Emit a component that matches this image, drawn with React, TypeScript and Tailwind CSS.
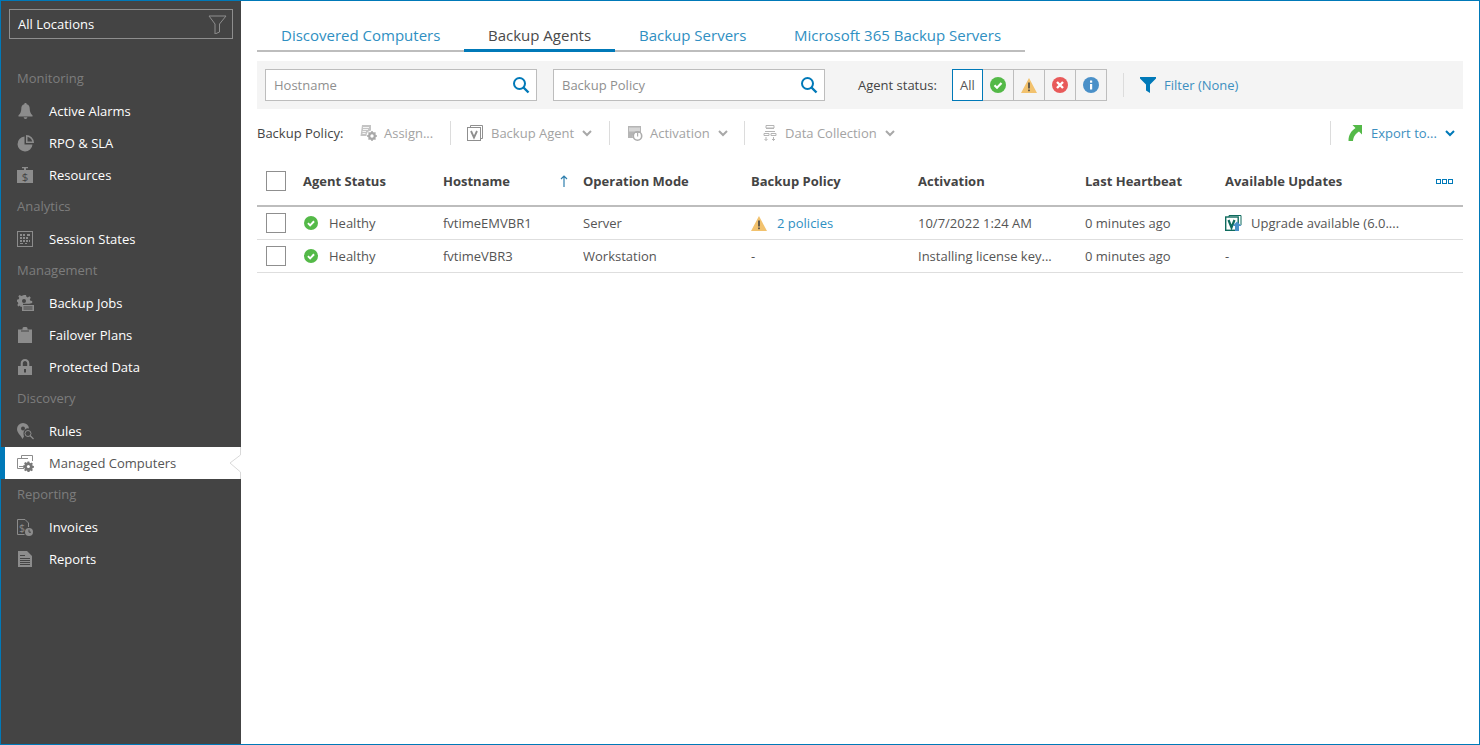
import React from "react";

const F = "#8c8c8c";
const Bell = () => (<svg width="15" height="16" viewBox="0 0 15 16"><path fill={F} d="M7.500 0c.8 0 1.200.5 1.200 1.200 2.100.5 3 2.200 3 4.300 0 3 .8 5 2.800 6.800v1.200H0.500v-1.200C2.500 10.500 3.300 8.500 3.300 5.500c0-2.100.9-3.800 3-4.300C6.300.5 6.700 0 7.500 0zM5.700 14.300h3.600c0 1-.8 1.700-1.800 1.700s-1.800-.7-1.800-1.700z"/></svg>);
const Pie = () => (<svg width="17" height="17" viewBox="0 0 17 17"><path fill={F} d="M7.500 1.500v8h8A7.500 7.500 0 1 1 7.500 1.500z"/><path fill={F} d="M9 0a8 8 0 0 1 8 8H9V0zm1.500 1.800v4.700h4.700a6.500 6.500 0 0 0-4.700-4.700z"/></svg>);
const Money = () => (<svg width="16" height="16" viewBox="0 0 16 16"><path fill={F} d="M5 0h6v1.200H9V3h7v13H0V3h7V1.200H5z"/><text x="8" y="14.200" textAnchor="middle" fontSize="11.500" fontFamily="Open Sans" fill="#444">$</text></svg>);
const Grid = () => (<svg width="16" height="16" viewBox="0 0 16 16"><rect x=".5" y=".5" width="15" height="15" fill="none" stroke={F}/><path fill={F} d="M3 3h2v2H3zM6 3h2v2H6zM10 3h3v2h-3zM3 6h2v2H3zM6 6h2v2H6zM9 6h2v2H9zM3 9h2v2H3zM6 9h2v2H6zM9 9h2v2H9zM12 9h1v2h-1zM3 12h3v1H3zM8 12h2v1H8z"/></svg>);
const GearDoc = () => (<svg width="17" height="17" viewBox="0 0 17 17"><path fill={F} d="M7 0h2l.4 1.800 1.400.6L12.400 1.300l1.400 1.400-1 1.600.6 1.400 1.800.4v2l-3 .6H6v3H3.400l-.4-1.300-1.600 1-1.100-1.400 1-1.600-.6-1.400L0 6.700v-2l1.700-.4.600-1.400-1-1.600L2.700 0 4.300 1l1.400-.6z"/><circle cx="7" cy="6" r="2" fill="#444"/><rect x="5" y="10" width="12" height="6" fill={F}/><rect x="6.500" y="11.500" width="9" height="1" fill="#444"/><rect x="6.500" y="13.500" width="9" height="1" fill="#444"/></svg>);
const Clip = () => (<svg width="14" height="16" viewBox="0 0 14 16"><path fill={F} d="M0 2.500h4.500V1.200C4.500.5 5.500 0 7 0s2.500.5 2.500 1.200v1.300H14V16H0z"/><rect x="3" y="3.500" width="8" height="1" fill="#444" /></svg>);
const Lock = () => (<svg width="14" height="16" viewBox="0 0 14 16"><path fill={F} d="M7 0c2.500 0 4.300 1.700 4.300 4.200V7H14v9H0V7h2.700V4.200C2.700 1.700 4.500 0 7 0zm0 2C5.700 2 4.800 3 4.800 4.300V7h4.400V4.300C9.200 3 8.300 2 7 2z"/><rect x="6" y="10" width="2" height="3.500" fill="#444"/></svg>);
const PinSearch = () => (<svg width="17" height="17" viewBox="0 0 17 17"><path fill={F} d="M6 0A6 6 0 0 1 12 5.500a4.500 4.500 0 0 0-5.500 4.500c0 2 .3 2.500.5 3.500L5.500 16C4 12.500 0 10 0 6a6 6 0 0 1 6-6z"/><circle cx="6" cy="5.500" r="2" fill="#444"/><circle cx="11" cy="10.500" r="3" fill="none" stroke={F}/><path stroke={F} strokeWidth="1.300" d="M13 12.500l3.500 3.500"/></svg>);
const Computers = () => (<svg width="17" height="17" viewBox="0 0 17 17" fill="none" stroke="#8c8c8c"><path d="M4.500 3V.5h11V6"/><path d="M7 13.500H.5v-10h10.500"/><path d="M2 11.500h4"/><path fill="#777" stroke="none" d="M10.500 6.500h1.800l.3 1.300 1 .4 1.100-.7 1.200 1.200-.7 1 .4 1 1.300.3v1.800l-1.300.3-.4 1 .7 1-1.200 1.200-1-.7-1 .4-.3 1.300h-1.800l-.3-1.300-1-.4-1 .7-1.200-1.200.7-1-.4-1-1.300-.3V10.600l1.300-.3.400-1-.7-1 1.200-1.200 1 .7 1-.4z"/><circle cx="11.400" cy="11.500" r="1.500" fill="#fff" stroke="none"/></svg>);
const Invoice = () => (<svg width="16" height="17" viewBox="0 0 16 17"><path fill="none" stroke={F} d="M7.500 15.500h-7V.5h7.500l3.500 3.500V8"/><text x="5" y="12.500" textAnchor="middle" fontSize="10.500" fontFamily="Open Sans" fill={F}>$</text><circle cx="12" cy="13" r="4" fill={F}/><path stroke="#444" fill="none" d="M12 10.500v2.700h2"/></svg>);
const Report = () => (<svg width="14" height="16" viewBox="0 0 14 16"><path fill={F} d="M0 0h9l5 5v11H0z"/><path fill="#444" d="M2 4h5v1H2zM2 7h10v1H2zM2 9h10v1H2zM2 11h10v1H2zM2 13h10v1H2z"/></svg>);

const Search = () => (<svg width="18" height="18" viewBox="0 0 18 18" fill="none" stroke="#0079b8" strokeWidth="2"><circle cx="7.500" cy="7.500" r="5.500"/><path d="M11.500 11.500l5 5" strokeWidth="2.400"/></svg>);
const Ok = ({ s = 15 }: { s?: number }) => (<svg width={s} height={s} viewBox="0 0 16 16"><circle cx="8" cy="8" r="8" fill="#54b948"/><path d="M4.500 8.200l2.500 2.500 4.500-4.700" fill="none" stroke="#fff" strokeWidth="2.200"/></svg>);
const Warn = ({ s = 16 }: { s?: number }) => (<svg width={s} height={s - 1} viewBox="0 0 16 15"><path d="M8 0l8 15H0z" fill="#f2c26e"/><rect x="7.200" y="4.500" width="1.600" height="6" fill="#444"/><rect x="7.200" y="11.500" width="1.600" height="1.700" fill="#444"/></svg>);
const Err = () => (<svg width="16" height="16" viewBox="0 0 16 16"><circle cx="8" cy="8" r="8" fill="#e85a5a"/><path d="M5 5l6 6M11 5l-6 6" stroke="#fff" strokeWidth="2.400"/></svg>);
const Info = () => (<svg width="16" height="16" viewBox="0 0 16 16"><circle cx="8" cy="8" r="8" fill="#4a90c8"/><rect x="7" y="7" width="2.200" height="5.500" fill="#fff"/><rect x="7" y="3.500" width="2.200" height="2.200" fill="#fff"/></svg>);
const Funnel = () => (<svg width="16" height="16" viewBox="0 0 16 16"><path fill="#0079b8" d="M0 0h16v1.500L10 7.500V16l-4-2.500V7.500L0 1.500z"/></svg>);
const Chev = ({ c = "#a8a8a8" }: { c?: string }) => (<svg width="10" height="7" viewBox="0 0 10 7"><path d="M1 1l4 4 4-4" fill="none" stroke={c} strokeWidth="2"/></svg>);
const Assign = () => (<svg width="17" height="16" viewBox="0 0 17 16"><path fill="#c4c4c4" d="M2 0h9v5.500A5.500 5.500 0 0 0 6.500 11H0.500z"/><path stroke="#f4f4f4" d="M3 2.500h6M3 4.500h5M2.500 6.500h3.500M2.500 8.500h3"/><circle cx="12" cy="11" r="2.800" fill="none" stroke="#a8a8a8" strokeWidth="2.200"/><path stroke="#a8a8a8" strokeWidth="1.500" d="M12 6v2M12 14v2M7 11h2M15 11h2M8.500 7.500l1.300 1.300M14.200 13.200l1.300 1.300M15.500 7.500l-1.300 1.300M9.800 13.200l-1.300 1.300"/></svg>);
const VBox = () => (<svg width="16" height="16" viewBox="0 0 16 16" fill="none" stroke="#8f8f8f"><path d="M3.500 2.500V.5h12v13h-1.500"/><rect x=".5" y="2.500" width="13" height="13"/><path d="M4 6l3 6.500L10 6" strokeWidth="1.800"/></svg>);
const Activ = () => (<svg width="16" height="15" viewBox="0 0 16 15"><path fill="#b5b5b5" d="M1 0h13v7H8a4 4 0 0 0-2 5H1z"/><rect x="2" y="1.500" width="11" height="4" fill="#d6d6d6"/><circle cx="10.500" cy="10" r="4.200" fill="none" stroke="#adadad" strokeWidth="1.600"/><rect x="10" y="7" width="1.200" height="3.500" fill="#adadad"/></svg>);
const DataC = () => (<svg width="16" height="16" viewBox="0 0 16 16" fill="none" stroke="#b5b5b5"><path d="M4 .5h8v2.500H4zM4 3.500h8M3 6.500h10M2 8.500h5v2H2zM9 8.500h5v2H9zM4 12v3.500M2.500 14l1.500 1.500L5.500 14M11.500 12v3.500M10 14l1.500 1.500L13 14"/></svg>);
const Export = () => (<svg width="14" height="16" viewBox="0 0 14 16"><path fill="#54b948" d="M4.500 0H14v9.500L11 6.500C8 8.500 5.500 11 5 16H0.500C0.500 10 3 6 7.500 3z"/></svg>);
const Upgrade = () => (<svg width="17" height="16" viewBox="0 0 17 16"><path fill="none" stroke="#0f6b5e" d="M4 2V.5h12V10"/><rect x=".7" y="2" width="12.500" height="13.300" fill="#fff" stroke="#0f6b5e" strokeWidth="1.400"/><path d="M3.500 5l3 7.500L9.500 5" fill="none" stroke="#0f6b5e" strokeWidth="2.200"/><path fill="#4a90c8" d="M12 6.500l4.500 4.500h-2.500v5h-4v-5H7.500z"/></svg>);

const navGroups: [string, [string, React.ReactNode][]][] = [
  ["Monitoring", [["Active Alarms", <Bell />], ["RPO & SLA", <Pie />], ["Resources", <Money />]]],
  ["Analytics", [["Session States", <Grid />]]],
  ["Management", [["Backup Jobs", <GearDoc />], ["Failover Plans", <Clip />], ["Protected Data", <Lock />]]],
  ["Discovery", [["Rules", <PinSearch />], ["Managed Computers", <Computers />]]],
  ["Reporting", [["Invoices", <Invoice />], ["Reports", <Report />]]],
];

const grid = "grid grid-cols-[46px_140px_140px_168px_167px_167px_140px_238px] items-center";
const Check = () => (<div className="ml-[9px] w-[20px] h-[20px] border border-[#8f8f8f] bg-white" />);
const Sep = () => (<div className="w-px h-[24px] bg-[#dcdcdc]" />);

function Tab({ label, w, active }: { label: string; w: string; active?: boolean }) {
  return (
    <div className={`${w} pl-[24px] text-[15px] leading-[33px] ${active ? "text-[#4a4a4a] border-b-[3px] border-[#0079b8] h-[33px]" : "text-[#2f8fc2] h-[32px]"}`}>{label}</div>
  );
}

function Row({ cells }: { cells: React.ReactNode[] }) {
  return (
    <div className={`${grid} h-[33px] border-b border-[#dedede] text-[#555]`}>
      <Check />
      {cells.map((c, i) => <div key={i} className="whitespace-nowrap overflow-hidden">{c}</div>)}
    </div>
  );
}

export default function App() {
  return (
    <div className="w-[1480px] h-[745px] flex border border-[#0079b8] bg-white overflow-hidden text-[13px] leading-[18px] text-[#444]" style={{ fontFamily: '"Open Sans", sans-serif' }}>
      <aside className="w-[240px] shrink-0 bg-[#444444] flex flex-col">
        <div className="mx-[8px] mt-[8px] h-[30px] border border-[#8e8e8e] flex items-center justify-between pl-[8px] pr-[5px] text-white">
          <span>All Locations</span>
          <svg width="19" height="19" viewBox="0 0 19 19" fill="none" stroke="#8e8e8e"><path d="M1 1h17l-6.500 8v8l-4.500 2V9z" /></svg>
        </div>
        <nav className="mt-[24px]">
          {navGroups.map(([g, items]) => (
            <div key={g}>
              <div className="h-[32px] pl-[16px] pb-[2px] flex items-center text-[#7d7d7d]">{g}</div>
              {items.map(([label, icon]) => {
                const active = label === "Managed Computers";
                return (
                  <div key={label} className={`relative h-[32px] flex items-center ${active ? "bg-white text-[#555] border-l-4 border-[#0079b8] pl-[12px]" : "text-white pl-[16px]"}`}>
                    <span className="w-[16px] h-[17px] flex items-center justify-center [&>svg]:shrink-0">{icon}</span>
                    <span className="ml-[16px]">{label}</span>
                    {active && (
                      <svg className="absolute right-0 top-0" width="12" height="32" viewBox="0 0 12 32" fill="none" stroke="#d9d9d9"><path d="M11.500 0V8L1 16l10.500 9v7" /></svg>
                    )}
                  </div>
                );
              })}
            </div>
          ))}
        </nav>
      </aside>

      <main className="flex-1 min-w-0 pl-[16px] pr-[16px] pt-[18px] flex flex-col">
        <div className="flex w-[768px] h-[33px] border-b-2 border-[#bdbdbd]">
          <Tab label="Discovered Computers" w="w-[207px]" />
          <Tab label="Backup Agents" w="w-[151px]" active />
          <Tab label="Backup Servers" w="w-[155px]" />
          <Tab label="Microsoft 365 Backup Servers" w="w-[255px]" />
        </div>

        <div className="mt-[9px] h-[48px] bg-[#f4f4f4] flex items-center pl-[8px]">
          <div className="w-[272px] h-[32px] border border-[#bdbdbd] bg-white flex items-center justify-between pl-[8px] pr-[6px] text-[#8f8f8f]"><span>Hostname</span><Search /></div>
          <div className="ml-[16px] w-[272px] h-[32px] border border-[#bdbdbd] bg-white flex items-center justify-between pl-[8px] pr-[6px] text-[#8f8f8f]"><span>Backup Policy</span><Search /></div>
          <span className="ml-[33px] w-[94px] text-[#444]">Agent status:</span>
          <div className="flex h-[32px] border border-[#bdbdbd] bg-[#f4f4f4]">
            <div className="w-[31px] -m-px mr-0 h-[32px] border border-[#0079b8] bg-white flex items-center justify-center text-[#555]">All</div>
            <div className="w-[31px] flex items-center justify-center border-r border-[#bdbdbd]"><Ok s={16} /></div>
            <div className="w-[31px] flex items-center justify-center border-r border-[#bdbdbd]"><Warn /></div>
            <div className="w-[31px] flex items-center justify-center border-r border-[#bdbdbd]"><Err /></div>
            <div className="w-[30px] flex items-center justify-center"><Info /></div>
          </div>
          <div className="ml-[16px]"><Sep /></div>
          <span className="ml-[16px]"><Funnel /></span>
          <span className="ml-[8px] text-[#3d8fc0]">Filter (None)</span>
        </div>

        <div className="h-[48px] flex items-center">
          <span className="text-[#444] w-[103px]">Backup Policy:</span>
          <Assign />
          <span className="ml-[7px] text-[#a3a3a3] w-[66px]">Assign...</span>
          <Sep />
          <span className="ml-[16px]"><VBox /></span>
          <span className="ml-[8px] text-[#a3a3a3] w-[91px]">Backup Agent</span>
          <Chev />
          <span className="ml-[17px]"><Sep /></span>
          <span className="ml-[17px]"><Activ /></span>
          <span className="ml-[7px] text-[#a3a3a3] w-[68px]">Activation</span>
          <Chev />
          <span className="ml-[16px]"><Sep /></span>
          <span className="ml-[17px]"><DataC /></span>
          <span className="ml-[7px] text-[#a3a3a3] w-[100px]">Data Collection</span>
          <Chev />
          <span className="ml-auto"><Sep /></span>
          <span className="ml-[17px]"><Export /></span>
          <span className="ml-[9px] text-[#3d8fc0] w-[74px]">Export to...</span>
          <span className="mr-[8px]"><Chev c="#0079b8" /></span>
        </div>

        <div className={`${grid} h-[50px] border-b-2 border-[#bdbdbd] font-bold text-[#444]`}>
          <Check />
          <div>Agent Status</div>
          <div className="flex items-center justify-between pr-[15px]">
            <span>Hostname</span>
            <svg width="8" height="12" viewBox="0 0 8 12"><path d="M4 1v11M1 4l3-3 3 3" fill="none" stroke="#2f7fae" strokeWidth="1.200" /></svg>
          </div>
          <div>Operation Mode</div>
          <div>Backup Policy</div>
          <div>Activation</div>
          <div>Last Heartbeat</div>
          <div className="flex items-center justify-between pr-[10px]">
            <span>Available Updates</span>
            <span className="flex gap-px">
              <span className="w-[5px] h-[5px] border border-[#0079b8]" />
              <span className="w-[5px] h-[5px] border border-[#0079b8]" />
              <span className="w-[5px] h-[5px] border border-[#0079b8]" />
            </span>
          </div>
        </div>

        <Row cells={[
          <span className="flex items-center gap-[11px]"><span className="ml-px"><Ok s={14} /></span>Healthy</span>,
          "fvtimeEMVBR1",
          "Server",
          <span className="flex items-center gap-[10px]"><Warn /><span className="text-[#2f8fc2]">2 policies</span></span>,
          "10/7/2022 1:24 AM",
          "0 minutes ago",
          <span className="flex items-center gap-[9px]"><Upgrade />Upgrade available (6.0....</span>,
        ]} />
        <Row cells={[
          <span className="flex items-center gap-[11px]"><span className="ml-px"><Ok s={14} /></span>Healthy</span>,
          "fvtimeVBR3",
          "Workstation",
          "-",
          "Installing license key...",
          "0 minutes ago",
          "-",
        ]} />
      </main>
    </div>
  );
}
